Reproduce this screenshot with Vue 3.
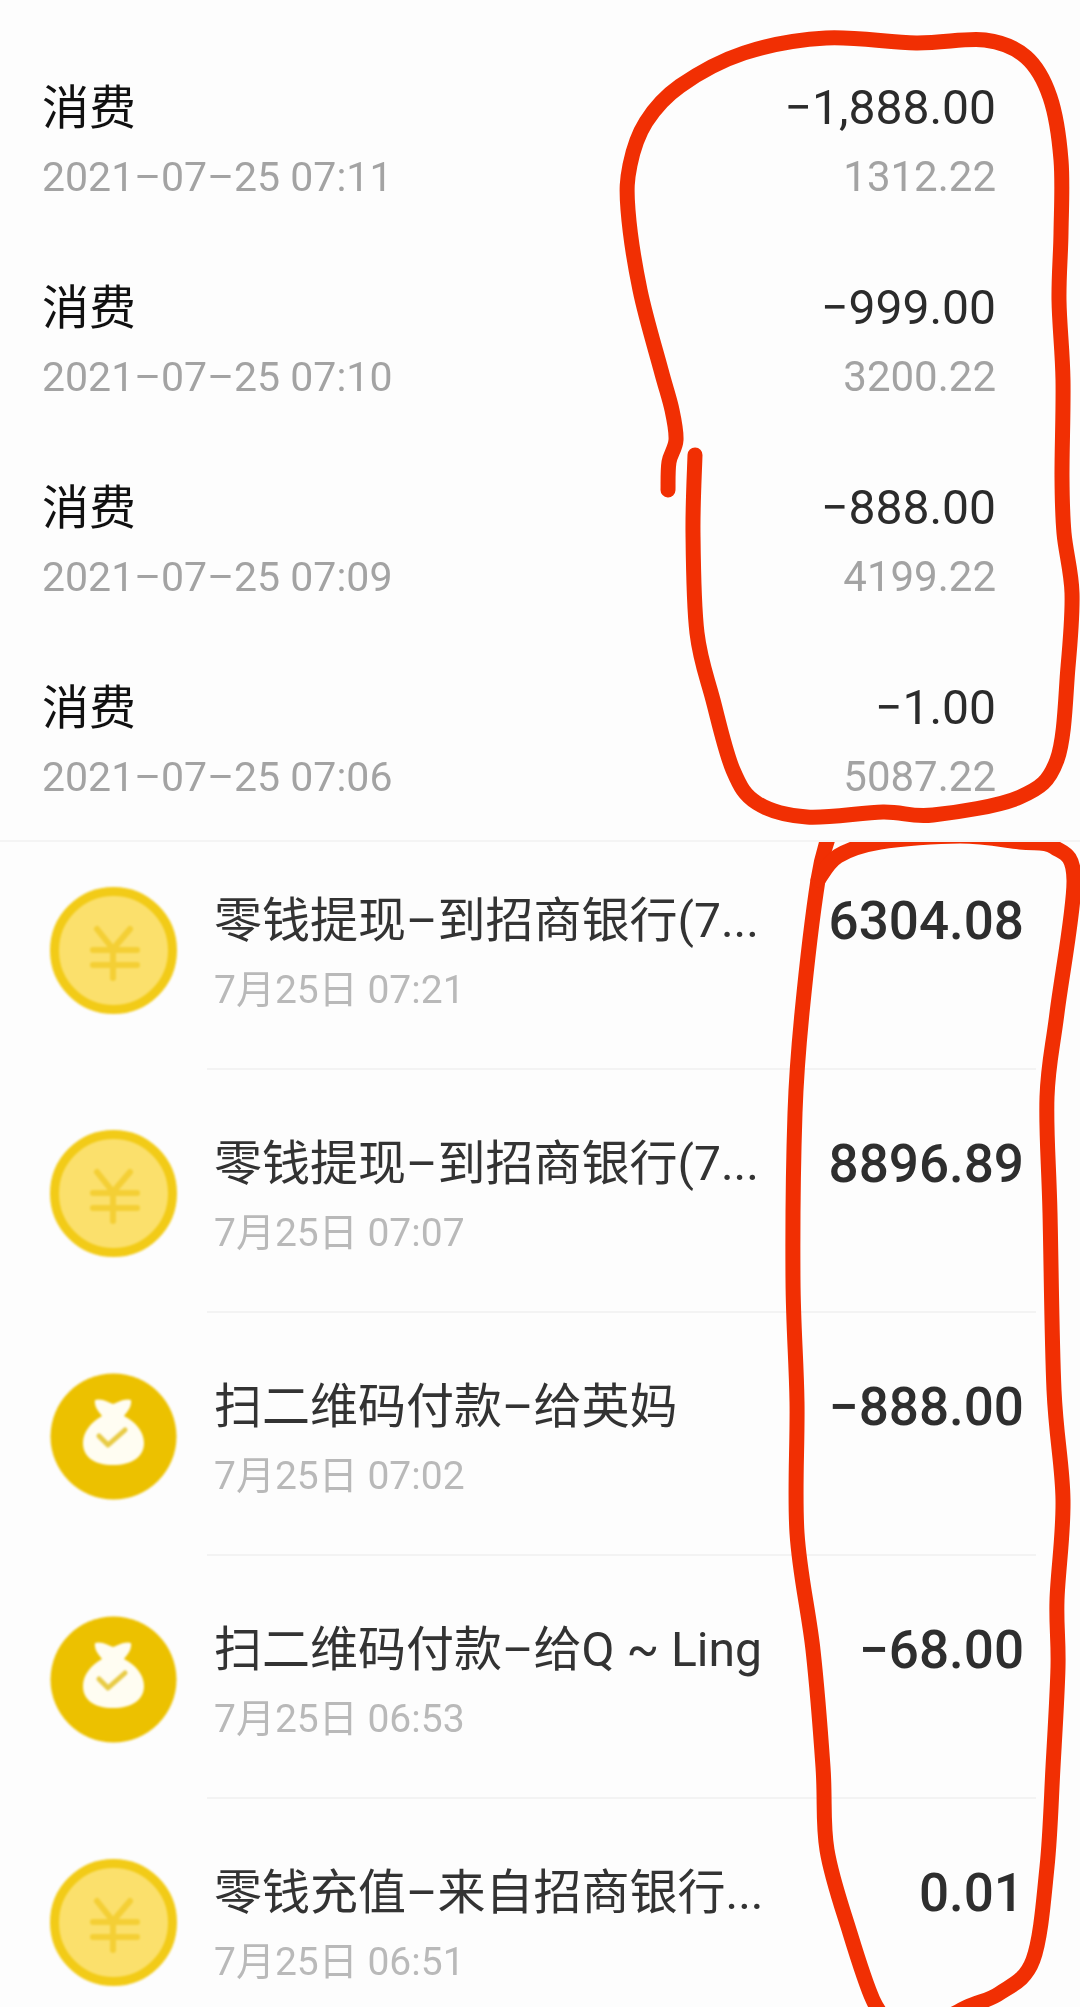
<script setup>
const spending = [
  { amount: '−1,888.00', time: '2021–07–25 07:11', balance: '1312.22' },
  { amount: '−999.00', time: '2021–07–25 07:10', balance: '3200.22' },
  { amount: '−888.00', time: '2021–07–25 07:09', balance: '4199.22' },
  { amount: '−1.00', time: '2021–07–25 07:06', balance: '5087.22' }
]

const wallet = [
  { type: 'coin', title: '零钱提现–到招商银行(7...', time: '7月25日 07:21', amount: '6304.08' },
  { type: 'coin', title: '零钱提现–到招商银行(7...', time: '7月25日 07:07', amount: '8896.89' },
  { type: 'bag', title: '扫二维码付款–给英妈', time: '7月25日 07:02', amount: '−888.00' },
  { type: 'bag', title: '扫二维码付款–给Q ~ Ling', time: '7月25日 06:53', amount: '−68.00' },
  { type: 'coin', title: '零钱充值–来自招商银行...', time: '7月25日 06:51', amount: '0.01' }
]

// smooth line through hand-picked points (catmull-rom to bezier)
function smooth(pts) {
  let d = `M${pts[0][0]} ${pts[0][1]}`
  for (let i = 0; i < pts.length - 1; i++) {
    const p0 = pts[i - 1] || pts[i]
    const p1 = pts[i]
    const p2 = pts[i + 1]
    const p3 = pts[i + 2] || p2
    const c1x = p1[0] + (p2[0] - p0[0]) / 6
    const c1y = p1[1] + (p2[1] - p0[1]) / 6
    const c2x = p2[0] - (p3[0] - p1[0]) / 6
    const c2y = p2[1] - (p3[1] - p1[1]) / 6
    d += ` C${c1x} ${c1y} ${c2x} ${c2y} ${p2[0]} ${p2[1]}`
  }
  return d
}

const topLoop = smooth([
  [668, 490], [669, 462], [676, 440], [672, 410], [661, 370], [640, 290], [628, 210], [630, 165],
  [646, 122], [680, 86], [744, 53], [826, 38], [916, 43], [985, 40], [1026, 57], [1050, 97],
  [1061, 160], [1061, 233], [1059, 300], [1063, 380], [1062, 477],
  [1064, 533], [1072, 593], [1068, 667], [1057, 760], [1020, 797], [933, 815],
  [883, 812], [807, 817], [757, 803], [733, 770], [713, 700], [697, 633], [693, 533], [695, 455]
])

// second loop, y measured from the top of the wallet section (842)
const bottomOuter = smooth([
  [830, -10], [818, 38], [802, 171], [795, 271], [793, 438], [797, 560], [797, 691],
  [813, 808], [823, 925], [827, 1008], [850, 1091], [873, 1158], [895, 1190]
])
const bottomArc = smooth([
  [818, 38], [838, 14], [880, 0], [960, -6], [1020, 0], [1054, 5], [1074, 38], [1057, 171],
  [1047, 255], [1050, 371], [1054, 548], [1063, 658], [1057, 758], [1058, 825], [1053, 925],
  [1047, 1025], [1033, 1118], [1000, 1151], [967, 1165], [930, 1185]
])
</script>

<template>
  <div class="page">
    <section class="spending">
      <div class="spend_row" v-for="item in spending" :key="item.time">
        <div class="col">
          <div class="spend_title">消费</div>
          <div class="spend_time">{{ item.time }}</div>
        </div>
        <div class="col right">
          <div class="spend_amount">{{ item.amount }}</div>
          <div class="spend_balance">{{ item.balance }}</div>
        </div>
      </div>
      <svg class="scribble" width="1080" height="842" viewBox="0 0 1080 842">
        <path :d="topLoop" />
      </svg>
    </section>

    <section class="wallet">
      <div class="wallet_row" v-for="item in wallet" :key="item.time">
        <svg v-if="item.type === 'coin'" class="icon" width="127" height="127" viewBox="0 0 127 127">
          <circle cx="63.5" cy="63.5" r="59" fill="#fbe06c" stroke="#f2cb17" stroke-width="9" />
          <path d="M47 42 L63 62 L80 42 M63 62 V91 M43 63 H87 M43 78 H87" fill="none" stroke="#f4cf35" stroke-width="6" stroke-linecap="round" />
        </svg>
        <svg v-else class="icon" width="127" height="127" viewBox="0 0 127 127">
          <circle cx="63.5" cy="63.5" r="63" fill="#ecc100" />
          <path d="M45 27 C52 25 58 29 63 31 C68 29 75 25 81 27 C82 33 78 38 74 43 C86 49 94 59 94 70 C94 84 82 92 63 92 C44 92 33 84 33 70 C33 59 41 49 52 43 C48 38 44 33 45 27 Z" fill="#fffdf2" />
          <path d="M49 63 L58 72 L75 57" fill="none" stroke="#e8cb45" stroke-width="5" stroke-linecap="round" stroke-linejoin="round" />
        </svg>
        <div class="wallet_body">
          <div class="wallet_title">{{ item.title }}</div>
          <div class="wallet_time">{{ item.time }}</div>
        </div>
        <div class="wallet_amount">{{ item.amount }}</div>
      </div>
      <svg class="scribble" width="1080" height="1165" viewBox="0 0 1080 1165">
        <path :d="bottomOuter" />
        <path :d="bottomArc" />
      </svg>
    </section>
  </div>
</template>

<style>
html, body {
  margin: 0;
  background: #fdfdfd;
  overflow: hidden;
}
</style>

<style scoped>
.page {
  width: 1080px;
  height: 2007px;
  overflow: hidden;
  background: #fdfdfd;
  font-family: Roboto, "Noto Sans CJK SC", sans-serif;
}
.spending {
  position: relative;
  height: 842px;
  box-sizing: border-box;
  padding-top: 42px;
  border-bottom: 2px solid #f4f4f4;
}
.spend_row {
  height: 200px;
  box-sizing: border-box;
  padding: 36px 84px 0 42px;
  display: flex;
  justify-content: space-between;
  filter: blur(0.6px);
}
.col {
  display: flex;
  flex-direction: column;
  gap: 9px;
}
.right {
  align-items: flex-end;
}
.spend_title {
  font-size: 47px;
  line-height: 60px;
  color: #111;
}
.spend_time {
  font-size: 41px;
  line-height: 60px;
  color: #a3a3a3;
}
.spend_balance {
  font-size: 42px;
  line-height: 60px;
  color: #a3a3a3;
}
.spend_amount {
  font-size: 48px;
  line-height: 60px;
  color: #2b2b2b;
}
.wallet {
  position: relative;
  height: 1165px;
  overflow: hidden;
}
.wallet_row {
  height: 243px;
  box-sizing: border-box;
  padding: 45px 56px 0 50px;
  display: flex;
  align-items: flex-start;
  position: relative;
  top: -15px;
}
.wallet_row::after {
  content: "";
  position: absolute;
  left: 207px;
  right: 44px;
  bottom: 0;
  height: 2px;
  background: #f3f3f3;
}
.icon {
  flex: none;
  margin-top: 15px;
  filter: blur(0.8px);
}
.wallet_body {
  margin-left: 37px;
  margin-top: 19px;
  flex: 1;
  display: flex;
  flex-direction: column;
  gap: 9px;
  min-width: 0;
  filter: blur(0.6px);
}
.wallet_title {
  font-size: 48px;
  line-height: 60px;
  color: #333;
  white-space: nowrap;
}
.wallet_time {
  font-size: 39px;
  line-height: 60px;
  color: #b9b9b9;
}
.wallet_amount {
  margin-top: 19px;
  font-size: 53px;
  line-height: 60px;
  font-weight: 500;
  color: #2e2e2e;
  filter: blur(0.5px);
}
.scribble {
  position: absolute;
  left: 0;
  top: 0;
  pointer-events: none;
}
.scribble path {
  fill: none;
  stroke: #f12f03;
  stroke-width: 15;
  stroke-linecap: round;
  stroke-linejoin: round;
}
</style>
